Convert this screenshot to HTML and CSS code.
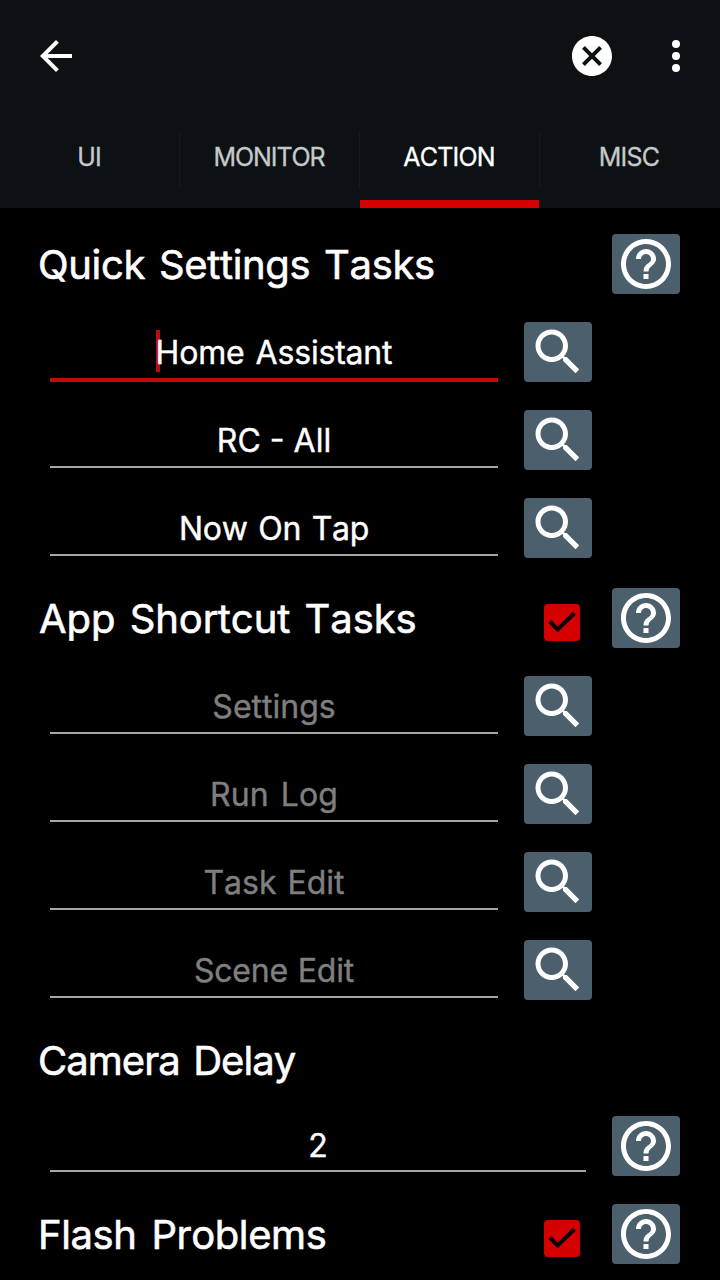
FILE: index.html
```html
<!DOCTYPE html>
<html lang="en">
<head>
<meta charset="utf-8">
<title>Preferences</title>
<link rel="stylesheet" href="styles.css">
</head>
<body>
<svg class="defs" width="0" height="0">
  <symbol id="search" viewBox="0 0 24 24"><path d="M15.5 14h-.79l-.28-.27C15.41 12.59 16 11.11 16 9.5 16 5.91 13.09 3 9.5 3S3 5.91 3 9.5 5.91 16 9.5 16c1.61 0 3.09-.59 4.23-1.57l.27.28v.79l5 4.99L20.49 19l-4.99-5zm-6 0C7.01 14 5 11.99 5 9.5S7.01 5 9.5 5 14 7.01 14 9.5 11.99 14 9.5 14z"/></symbol>
  <symbol id="help" viewBox="0 0 24 24"><path d="M11 18h2v-2h-2v2zm1-16C6.48 2 2 6.48 2 12s4.48 10 10 10 10-4.48 10-10S17.52 2 12 2zm0 18c-4.41 0-8-3.59-8-8s3.59-8 8-8 8 3.59 8 8-3.59 8-8 8zm0-14c-2.21 0-4 1.79-4 4h2c0-1.1.9-2 2-2s2 .9 2 2c0 2-3 1.75-3 5h2c0-2.25 3-2.5 3-5 0-2.21-1.79-4-4-4z"/></symbol>
</svg>
<header class="header">
  <div class="appbar">
    <svg class="icon" viewBox="0 0 24 24"><path d="M20 11H7.83l5.59-5.59L12 4l-8 8 8 8 1.41-1.41L7.83 13H20v-2z"/></svg>
    <span class="spacer"></span>
    <svg class="icon" viewBox="0 0 24 24"><path d="M12 2C6.47 2 2 6.47 2 12s4.47 10 10 10 10-4.47 10-10S17.53 2 12 2zm5 13.59L15.59 17 12 13.41 8.41 17 7 15.59 10.59 12 7 8.41 8.41 7 12 10.59 15.59 7 17 8.41 13.41 12 17 15.59z"/></svg>
    <svg class="icon more" viewBox="0 0 24 24"><circle cx="12" cy="6" r="2"/><circle cx="12" cy="12" r="2"/><circle cx="12" cy="18" r="2"/></svg>
  </div>
  <nav class="tabs">
    <a class="tab">UI</a>
    <a class="tab monitor">MONITOR</a>
    <a class="tab active">ACTION</a>
    <a class="tab misc">MISC</a>
  </nav>
</header>
<main class="content">
  <div class="row"><h2 class="title quick">Quick Settings Tasks</h2><button class="btn"><svg><use href="#help"/></svg></button></div>
  <div class="row"><div class="field focused"><span class="value home">Home Assistant<i class="caret"></i></span></div><button class="btn find"><svg><use href="#search"/></svg></button></div>
  <div class="row"><div class="field"><span class="value rc">RC - All</span></div><button class="btn find"><svg><use href="#search"/></svg></button></div>
  <div class="row"><div class="field"><span class="value now">Now On Tap</span></div><button class="btn find"><svg><use href="#search"/></svg></button></div>

  <div class="row section"><h2 class="title app">App Shortcut Tasks</h2><svg class="check" viewBox="0 0 36 37"><rect width="36" height="37" rx="4"/><path d="M5.7 17.5L13.7 25.4L30.3 9.2"/></svg><button class="btn"><svg><use href="#help"/></svg></button></div>
  <div class="row"><div class="field"><span class="value hint settings">Settings</span></div><button class="btn find"><svg><use href="#search"/></svg></button></div>
  <div class="row"><div class="field"><span class="value hint run">Run Log</span></div><button class="btn find"><svg><use href="#search"/></svg></button></div>
  <div class="row"><div class="field"><span class="value hint task">Task Edit</span></div><button class="btn find"><svg><use href="#search"/></svg></button></div>
  <div class="row"><div class="field"><span class="value hint scene">Scene Edit</span></div><button class="btn find"><svg><use href="#search"/></svg></button></div>

  <div class="row"><h2 class="title camera">Camera Delay</h2></div>
  <div class="row"><div class="field wide"><span class="value">2</span></div><button class="btn"><svg><use href="#help"/></svg></button></div>
  <div class="row"><h2 class="title flash">Flash Problems</h2><svg class="check" viewBox="0 0 36 37"><rect width="36" height="37" rx="4"/><path d="M5.7 17.5L13.7 25.4L30.3 9.2"/></svg><button class="btn"><svg><use href="#help"/></svg></button></div>
</main>
</body>
</html>
```
FILE: styles.css
```css
* { box-sizing: border-box; }
body {
  margin: 0;
  width: 720px;
  height: 1280px;
  overflow: hidden;
  background: #000;
  color: #fff;
  font-family: Inter, "Liberation Sans", sans-serif;
  font-kerning: none;
}
.defs { display: block; position: absolute; }
.header { height: 208px; background: #0d1113; }
.appbar { display: flex; align-items: center; height: 112px; padding: 0 20px 0 32px; }
.spacer { flex: 1; }
.icon { width: 48px; height: 48px; fill: #fff; }
.more { margin-left: 36px; }
.tabs { display: grid; grid-template-columns: repeat(4, 180px); height: 96px; }
.tab {
  height: 96px;
  padding: 29px 2px 0 0;
  line-height: 32px;
  text-align: center;
  font-size: 25px;
  letter-spacing: -0.8px;
  -webkit-text-stroke: 0.3px;
  color: #c5c9ca;
  background: linear-gradient(#171b1d, #171b1d) 179px 20px / 1px 56px no-repeat;
}
.tab.monitor { letter-spacing: -1.1px; }
.tab.misc { background: none; }
.tab.active {
  color: #fff;
  background:
    linear-gradient(#d50000, #d50000) 0 88px / 179px 8px no-repeat,
    linear-gradient(#171b1d, #171b1d) 179px 20px / 1px 56px no-repeat;
}
.content { padding-top: 12px; }
.row { display: flex; height: 88px; padding: 0 40px 0 38px; }
.section { margin-top: 2px; }
.title {
  flex: 1;
  margin: 0;
  padding-top: 20px;
  font-size: 40px;
  font-weight: 400;
  line-height: 50px;
  white-space: nowrap;
  -webkit-text-stroke: 0.6px;
}
.quick { word-spacing: 3px; letter-spacing: -0.35px; }
.app { padding-left: 1px; word-spacing: 3px; letter-spacing: -0.05px; }
.camera { padding-top: 22px; word-spacing: 3px; letter-spacing: -0.95px; }
.flash { word-spacing: 4px; letter-spacing: -0.4px; }
.field {
  width: 448px;
  height: 72px;
  margin-left: 12px;
  padding-top: 25px;
  border-bottom: 2px solid #a6a6a6;
  text-align: center;
  font-size: 32px;
  line-height: 40px;
  -webkit-text-stroke: 0.4px;
}
.focused { height: 74px; border-bottom: 4px solid #c30a0d; }
.wide { width: 536px; height: 70px; padding-top: 24px; }
.value { position: relative; white-space: nowrap; }
.home { word-spacing: 2px; letter-spacing: -0.15px; }
.now { word-spacing: 2px; letter-spacing: -0.3px; }
.run { word-spacing: 3px; letter-spacing: 0.1px; }
.task { word-spacing: 2px; }
.scene { word-spacing: 1px; letter-spacing: -0.2px; }
.hint { color: #7f7f7f; }
.caret {
  position: absolute;
  left: 0;
  top: -3px;
  width: 4px;
  height: 42px;
  background: #b60d10;
  z-index: -1;
}
.btn {
  width: 68px;
  height: 60px;
  margin: 14px 0 0 26px;
  padding: 0 4px;
  border: 0;
  border-radius: 4px;
  background: #4b5f6c;
}
.btn svg { display: block; width: 60px; height: 60px; fill: #fff; }
.check { width: 36px; height: 37px; margin: 30px 6px 0 0; fill: #d50000; }
.check path { fill: none; stroke: #080000; stroke-width: 4; }
```
